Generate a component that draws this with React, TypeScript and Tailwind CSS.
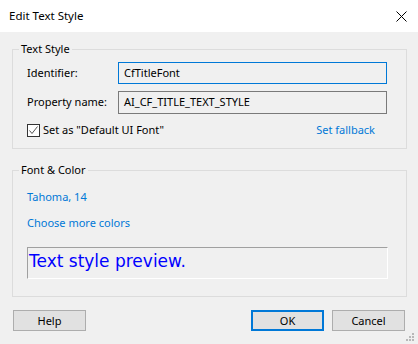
import React from 'react';

const ui = "font-['Segoe_UI','Noto_Sans',sans-serif] text-[11px]";

function Button({ label, primary }: { label: string; primary?: boolean }) {
  return (
    <button
      className={`w-[73px] h-[21px] bg-[#e1e1e1] text-black leading-none ${
        primary ? 'border-2 border-[#0078d7]' : 'border border-[#adadad]'
      }`}
    >
      {label}
    </button>
  );
}

export default function App() {
  return (
    <div className={`w-[418px] h-[344px] bg-[#f0f0f0] flex flex-col relative ${ui} text-black`}>
      {/* title bar */}
      <div className="h-8 bg-white flex items-center justify-between pl-[9px] pr-[11px] shrink-0">
        <span className="text-[11.5px]">Edit Text Style</span>
        <svg width="11" height="11" viewBox="0 0 11 11" className="text-black">
          <path d="M0.5 0.5 L10.5 10.5 M10.5 0.5 L0.5 10.5" stroke="currentColor" strokeWidth="1" />
        </svg>
      </div>

      <div className="pl-3 pr-[11px] flex flex-col">
        {/* Text Style group */}
        <fieldset className="mt-[9px] border border-[#dcdcdc] pl-[6px] pr-[19px] pb-[11px]">
          <legend className="px-[2px] leading-4">Text Style</legend>
          <div className="pl-2 pt-[5px] flex flex-col">
            <div className="flex items-center h-[22px]">
              <span className="w-[91px]">Identifier:</span>
              <div className="flex-1 h-[22px] border border-[#0078d7] flex items-center pl-[5px]">CfTitleFont</div>
            </div>
            <div className="flex items-center h-[23px] mt-[7px]">
              <span className="w-[91px]">Property name:</span>
              <div className="flex-1 h-[23px] border border-[#7a7a7a] flex items-center pl-[5px]">AI_CF_TITLE_TEXT_STYLE</div>
            </div>
            <div className="flex items-center justify-between mt-[10px] h-[13px]">
              <label className="flex items-center gap-[3px]">
                <span className="w-[13px] h-[13px] border border-[#333] bg-white flex items-center justify-center">
                  <svg width="11" height="11" viewBox="0 0 11 11">
                    <path d="M1.5 5.5 L4 8.5 L9.5 1.5" fill="none" stroke="#555" strokeWidth="1" />
                  </svg>
                </span>
                <span>Set as "Default UI Font"</span>
              </label>
              <span className="text-[#0078d7] mr-[12px]">Set fallback</span>
            </div>
          </div>
        </fieldset>

        {/* Font & Color group */}
        <fieldset className="mt-[13px] border border-[#dcdcdc] pl-[6px] pr-[18px] pb-[17px]">
          <legend className="px-[2px] leading-4">Font &amp; Color</legend>
          <div className="pl-2 pt-[11px] flex flex-col">
            <span className="text-[#0078d7] leading-4">Tahoma, 14</span>
            <span className="text-[#0078d7] leading-4 mt-[10px]">Choose more colors</span>
            <div className="mt-[16px] h-[32px] border-t border-l border-t-[#a0a0a0] border-l-[#a0a0a0] border-b border-r border-b-white border-r-white flex items-center pl-[1px] pb-[3px]">
              <span className="font-['Tahoma','DejaVu_Sans',sans-serif] text-[17px] text-[#0000ff] leading-none">
                Text style preview.
              </span>
            </div>
          </div>
        </fieldset>

        {/* buttons */}
        <div className="flex items-center mt-[13px] pl-[1px] pr-[2px]">
          <Button label="Help" />
          <div className="flex-1" />
          <Button label="OK" primary />
          <div className="w-2" />
          <Button label="Cancel" />
        </div>
      </div>

      {/* resize grip */}
      <svg width="9" height="9" viewBox="0 0 9 9" className="absolute right-[3px] bottom-[2px]">
        <g fill="#b8b8b8">
          <rect x="6" y="0" width="2" height="2" />
          <rect x="3" y="3" width="2" height="2" />
          <rect x="6" y="3" width="2" height="2" />
          <rect x="0" y="6" width="2" height="2" />
          <rect x="3" y="6" width="2" height="2" />
          <rect x="6" y="6" width="2" height="2" />
        </g>
      </svg>
    </div>
  );
}
